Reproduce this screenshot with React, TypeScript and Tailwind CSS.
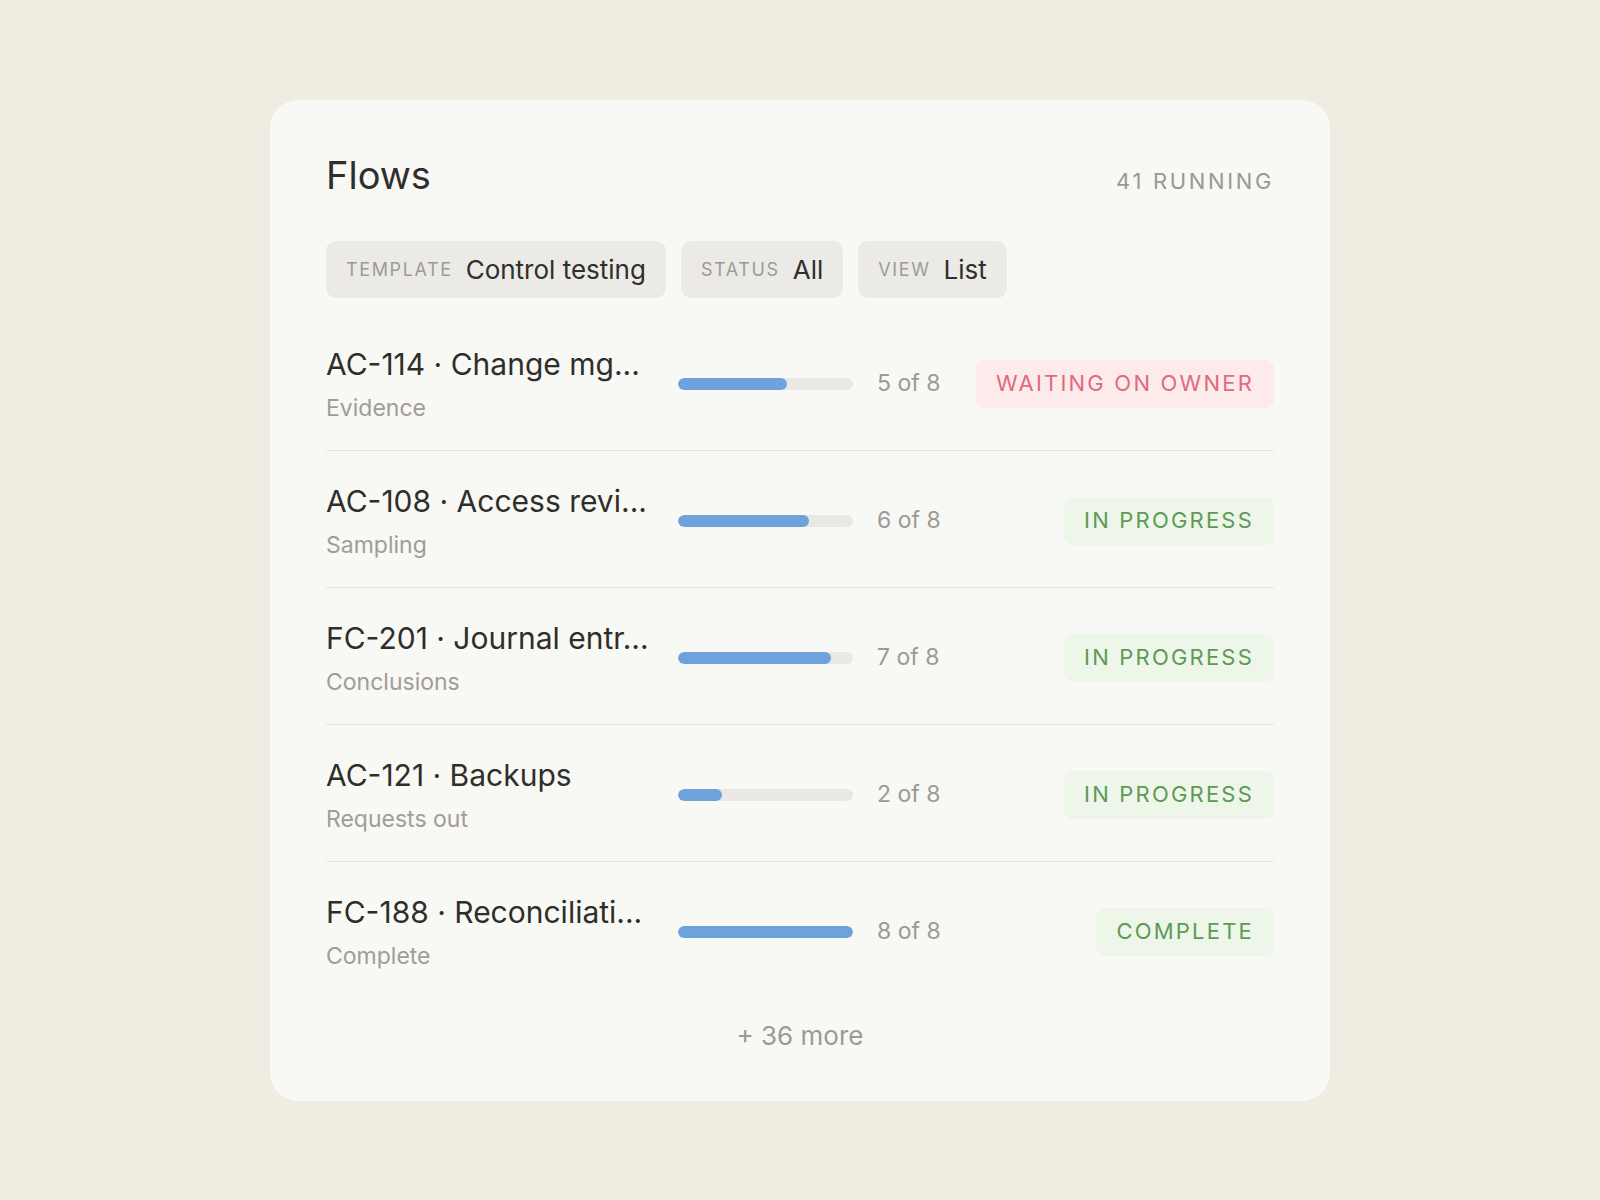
import React from 'react'

type Tone = 'waiting' | 'progress' | 'complete'

type Flow = {
  id: string
  title: string
  stage: string
  done: number
  total: number
  status: string
  tone: Tone
}

const flows: Flow[] = [
  { id: 'ac114', title: 'AC-114 · Change mg...', stage: 'Evidence', done: 5, total: 8, status: 'Waiting on owner', tone: 'waiting' },
  { id: 'ac108', title: 'AC-108 · Access revi...', stage: 'Sampling', done: 6, total: 8, status: 'In progress', tone: 'progress' },
  { id: 'fc201', title: 'FC-201 · Journal entr...', stage: 'Conclusions', done: 7, total: 8, status: 'In progress', tone: 'progress' },
  { id: 'ac121', title: 'AC-121 · Backups', stage: 'Requests out', done: 2, total: 8, status: 'In progress', tone: 'progress' },
  { id: 'fc188', title: 'FC-188 · Reconciliati...', stage: 'Complete', done: 8, total: 8, status: 'Complete', tone: 'complete' },
]

const toneClass: Record<Tone, string> = {
  waiting: 'bg-[#fdeaea] text-[#e06a7e]',
  progress: 'bg-[#edf6e9] text-[#5e9a56]',
  complete: 'bg-[#edf6e9] text-[#5e9a56]',
}

function Chip({ label, value }: { label: string; value: string }) {
  return (
    <div className="flex h-[57px] items-center gap-[13px] rounded-[10px] bg-[#ebeae6] px-5">
      <span className="text-[18px] uppercase tracking-[0.09em] text-[#9d9b96]">{label}</span>
      <span className="text-[26px] text-[#302f2c]">{value}</span>
    </div>
  )
}

function FlowRow({ flow, last }: { flow: Flow; last: boolean }) {
  const pct = (flow.done / flow.total) * 100
  return (
    <div className={'flex items-center pt-8 pb-[28px] ' + (last ? '' : 'border-b border-[#e5e4e0]')}>
      <div className="w-[352px] shrink-0">
        <p className="overflow-hidden whitespace-nowrap text-[30px] leading-[36px] text-[#2f2e2b]">{flow.title}</p>
        <p className="mt-3 text-[23px] leading-[28px] text-[#a09d97]">{flow.stage}</p>
      </div>
      <div className="h-3 w-[175px] shrink-0 overflow-hidden rounded-full bg-[#e9e8e4]">
        <div className="h-full rounded-full bg-[#6ea2dd]" style={{ width: `${pct}%` }} />
      </div>
      <span className="ml-6 w-[80px] shrink-0 text-[23px] text-[#9c9a95]">
        {flow.done} of {flow.total}
      </span>
      <span
        className={
          'ml-auto flex h-12 items-center rounded-[9px] px-5 text-[22px] uppercase tracking-[0.1em] ' +
          toneClass[flow.tone]
        }
      >
        {flow.status}
      </span>
    </div>
  )
}

export default function App() {
  return (
    <div
      className="flex min-h-screen items-center justify-center bg-[#f1ece1]"
      style={{ fontFamily: 'Inter, "Noto Sans", sans-serif' }}
    >
      <div className="w-[1060px] rounded-[28px] bg-[#f8f8f4] px-14 pt-14 pb-[46px]">
        <div className="flex items-baseline justify-between">
          <h1 className="text-[38px] leading-none text-[#2f2e2b]">Flows</h1>
          <span className="text-[22px] uppercase tracking-[0.12em] text-[#9a9893]">41 running</span>
        </div>
        <div className="mt-[43px] flex gap-[15px]">
          <Chip label="Template" value="Control testing" />
          <Chip label="Status" value="All" />
          <Chip label="View" value="List" />
        </div>
        <div className="mt-4">
          {flows.map((f, i) => (
            <FlowRow key={f.id} flow={f} last={i === flows.length - 1} />
          ))}
        </div>
        <p className="mt-[18px] text-center text-[26px] text-[#9c9a95]">+ 36 more</p>
      </div>
    </div>
  )
}
